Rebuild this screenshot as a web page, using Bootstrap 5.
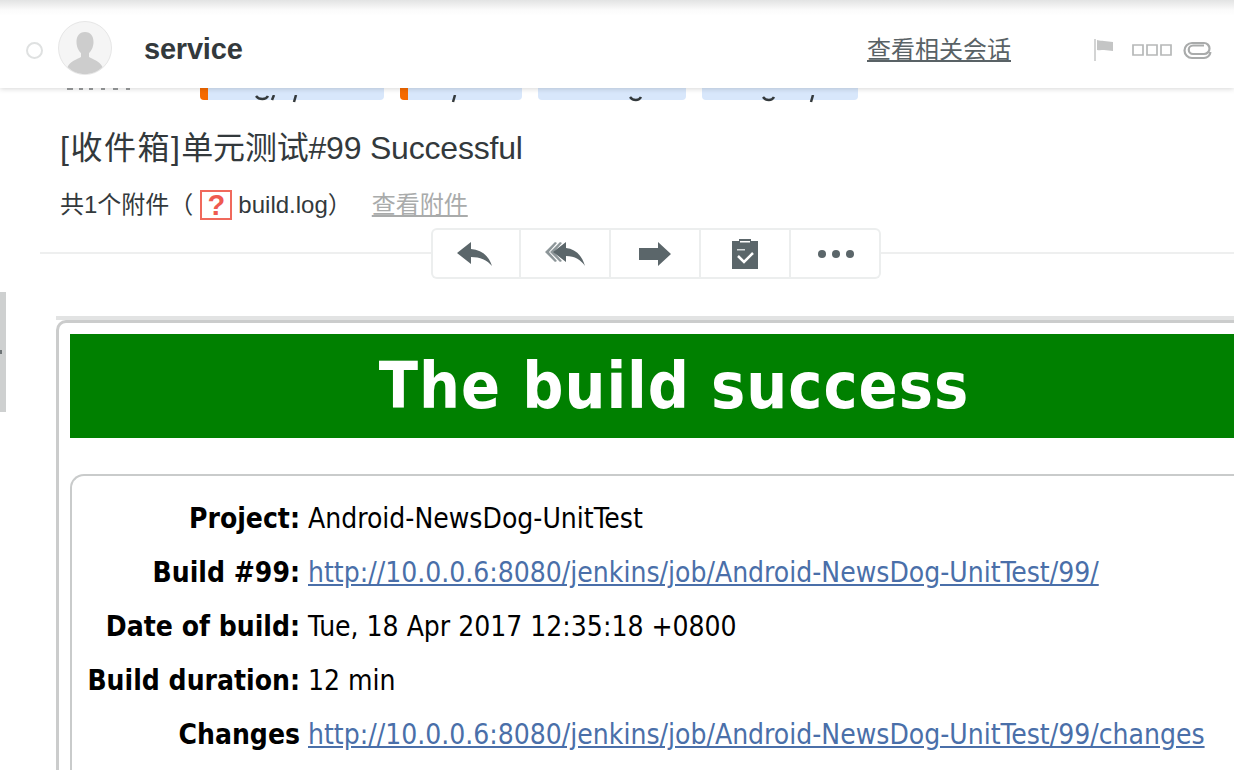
<!DOCTYPE html>
<html lang="zh-CN">
<head>
    <meta charset="UTF-8">
    <title>单元测试#99 Successful</title>
    <link href="https://cdn.jsdelivr.net/npm/bootstrap@5.3.0/dist/css/bootstrap.min.css" rel="stylesheet">
    <style>
        html, body {
            height: 770px;
            overflow: hidden;
        }

        body {
            background-color: #fff;
            color: #33393c;
            font-family: "Liberation Sans", "Noto Sans CJK SC", sans-serif;
        }

        .mail-head {
            height: 88px;
            padding: 12px 22px 0 26px;
            background: linear-gradient(#e2e3e3, #fbfbfb 10px, #fff 16px);
            box-shadow: 0 1px 5px rgba(0, 0, 0, .16);
            position: relative;
            z-index: 2;
        }

        .unread-dot {
            width: 17px;
            height: 17px;
            border: 2px solid #dfe1e1;
            border-radius: 50%;
            margin-right: 15px;
        }

        .avatar-pic {
            width: 54px;
            height: 54px;
            margin-top: -4px;
        }

        .sender-name {
            font-size: 29px;
            font-weight: 700;
            margin-left: 32px;
            margin-top: -1px;
            letter-spacing: -.2px;
        }

        .related-link {
            font-size: 24px;
            color: #596266;
            margin-right: 82px;
            line-height: 30px;
        }

        .flag-pic {
            margin-right: 13px;
        }

        .tofu-pic {
            margin: 0 11px 0 5px;
        }

        .tag-strip {
            height: 12px;
            padding-left: 65px;
            gap: 16px;
        }

        .from-marks {
            margin-right: -1px;
        }

        .tag-pill {
            height: 12px;
            background-color: #d8e7fb;
            border-radius: 0 0 4px 4px;
        }

        .tag-pill.is-marked {
            border-left: 8px solid #f56a00;
        }

        .subject-line {
            font-size: 32px;
            line-height: 40px;
            font-weight: 400;
            letter-spacing: -.2px;
            margin: 28px 0 0 60px;
        }

        .subject-box {
            letter-spacing: 1.500px;
        }

        .attach-line {
            font-size: 24px;
            line-height: 32px;
            margin: 21px 0 0 60px;
        }

        .attach-icon {
            width: 32px;
            height: 30px;
            border: 2px solid #f0695c;
            color: #ef5a50;
            font-size: 29px;
            font-weight: 700;
            line-height: 26px;
            margin: 0 6px 0 7px;
        }

        .attach-link {
            color: #a9abab;
            margin-left: 20px;
        }

        .action-wrap {
            margin: 7px 0 0 40px;
            height: 51px;
        }

        .action-rule {
            position: absolute;
            left: 0;
            right: 0;
            top: 24px;
            border-top: 2px solid #eeefef;
        }

        .action-group {
            position: relative;
            margin-left: 391px;
            width: 450px;
            height: 51px;
            background-color: #fff;
            box-shadow: inset 0 0 0 2px #eceeee;
            border-radius: 6px;
        }

        .action-btn {
            width: 90px;
            height: 100%;
            border-right: 2px solid #eceeee;
        }

        .action-btn:last-child {
            border-right: 0;
        }

        .side-tab {
            position: absolute;
            left: 0;
            top: 292px;
            width: 6px;
            height: 120px;
            background-color: #ced0d0;
        }

        .side-tab::after {
            content: "";
            position: absolute;
            left: 0;
            top: 58px;
            width: 2px;
            height: 4px;
            background-color: #6e7476;
        }

        .mail-frame {
            margin: 37px 0 0 56px;
            width: 1300px;
            height: 470px;
            border-top: 4px solid #e2e3e3;
        }

        .frame-inner {
            height: 100%;
            border: 3px solid #cbcccc;
            border-right: 0;
            border-bottom: 0;
            border-top-left-radius: 10px;
            padding: 11px 0 0 11px;
            font-family: "DejaVu Sans", sans-serif;
            color: #000;
        }

        .build-banner {
            width: 1208px;
            height: 104px;
            background-color: #008000;
            color: #fff;
            font-size: 64px;
            font-stretch: condensed;
            letter-spacing: 1px;
            font-weight: 700;
            line-height: 104px;
        }

        .info-box {
            margin-top: 36px;
            height: 400px;
            border: 2px solid #c9cbcb;
            border-right: 0;
            border-bottom: 0;
            border-top-left-radius: 14px;
            padding-top: 16px;
        }

        .info-row {
            height: 54px;
            line-height: 54px;
            font-size: 28px;
            font-stretch: condensed;
        }

        .info-label {
            width: 228px;
            margin-right: 8px;
            font-weight: 700;
        }

        .info-row a {
            color: #4a6fa9;
        }
    </style>
</head>
<body>
<header class="mail-head d-flex align-items-center">
    <span class="unread-dot flex-shrink-0"></span>
    <svg class="avatar-pic flex-shrink-0" viewBox="0 0 54 54">
        <circle cx="27" cy="27" r="26.500" fill="#f5f5f5" stroke="#e6e6e6"/>
        <path d="M27 11c-6 0-8.500 4.500-8.500 10 0 4.500 2 9 4.500 11v4c-3 2-11 4-13.500 10 4.500 4.500 11 7 17.500 7s13-2.500 17.500-7c-2.500-6-10.500-8-13.500-10v-4c2.500-2 4.500-6.500 4.500-11 0-5.500-2.500-10-8.500-10z" fill="#cdcdcd"/>
    </svg>
    <span class="sender-name">service</span>
    <a href="#" class="related-link ms-auto">查看相关会话</a>
    <svg width="21" height="24" viewBox="0 0 21 24" class="flag-pic">
        <path d="M2 1v22" stroke="#d3d4d4" stroke-width="2"/>
        <path d="M4 2c3 1 5 .5 7 1l9 1v9l-9-1c-2 0-4 .5-7 0z" fill="#c4c5c5"/>
    </svg>
    <svg width="40" height="14" viewBox="0 0 40 14" class="tofu-pic">
        <path d="M1 2h10v10H1zM15 2h10v10H15zM29 2h10v10H29z" fill="none" stroke="#b6b8b8" stroke-width="1.700"/>
    </svg>
    <svg width="29" height="20" viewBox="0 0 29 20">
        <path d="M21 5.500H10a4.200 4.200 0 0 0 0 8.500h11a4.500 4.500 0 0 0 0-11H9A7.500 7.500 0 0 0 9 18h12a7 7 0 0 0 6.500-6" fill="none" stroke="#a9abab" stroke-width="2.200"/>
    </svg>
</header>

<div class="side-tab"></div>

<div class="tag-strip d-flex">
    <svg class="from-marks" width="120" height="4" viewBox="0 0 120 4">
        <path d="M2 1h6M14 1h4M24 1h4M36 1h4M48 1h5M61 1h4" stroke="#9a9d9e" stroke-width="2"/>
    </svg>
    <span class="tag-pill is-marked" style="width: 184px">
        <svg width="176" height="12" viewBox="0 0 176 12">
            <path d="M48 1c3 4 10 4 12 0" fill="none" stroke="#33393c" stroke-width="2.500"/>
            <path d="M66 0l-2 5M88 0l-2 7" stroke="#33393c" stroke-width="2.500"/>
        </svg>
    </span>
    <span class="tag-pill is-marked" style="width: 122px">
        <svg width="114" height="12" viewBox="0 0 114 12">
            <path d="M47 0l-2 7" stroke="#33393c" stroke-width="2.500"/>
        </svg>
    </span>
    <span class="tag-pill" style="width: 148px">
        <svg width="148" height="12" viewBox="0 0 148 12">
            <path d="M92 2c3 4 9 4 11 0" fill="none" stroke="#33393c" stroke-width="2.500"/>
        </svg>
    </span>
    <span class="tag-pill" style="width: 156px">
        <svg width="156" height="12" viewBox="0 0 156 12">
            <path d="M61 2c3 4 9 4 11 0" fill="none" stroke="#33393c" stroke-width="2.500"/>
            <path d="M111 0l-2 7" stroke="#33393c" stroke-width="2.500"/>
        </svg>
    </span>
</div>

<h1 class="subject-line"><span class="subject-box">[收件箱]</span>单元测试#99 Successful</h1>

<div class="attach-line d-flex align-items-center">
    <span>共1个附件（</span>
    <span class="attach-icon d-inline-block text-center">?</span>
    <span>build.log）</span>
    <a href="#" class="attach-link">查看附件</a>
</div>

<div class="action-wrap position-relative">
    <div class="action-rule"></div>
    <div class="action-group d-flex">
        <div class="action-btn d-flex align-items-center justify-content-center">
            <svg width="38" height="26" viewBox="0 0 38 26"><path d="M1 12 15 1v7c11 1 18 7 21 17-5-6-12-9-21-9v7z" fill="#5b666a"/></svg>
        </div>
        <div class="action-btn d-flex align-items-center justify-content-center">
            <svg width="42" height="28" viewBox="0 0 42 28"><path d="M1 12 11 2l2 1-8 9 8 9-2 1zM6 12 16 2l2 1-8 9 8 9-2 1z" fill="#8d9699"/><path d="M9 12 22 2v6c9 1 16 7 19 18-4-6-10-10-19-10v6z" fill="#5b666a"/></svg>
        </div>
        <div class="action-btn d-flex align-items-center justify-content-center">
            <svg width="34" height="26" viewBox="0 0 34 26"><path d="M1 7h19V1l13 12-13 12v-6H1z" fill="#5b666a"/></svg>
        </div>
        <div class="action-btn d-flex align-items-center justify-content-center">
            <svg width="28" height="32" viewBox="0 0 28 32"><path d="M8 1h12v2h7v28H1V3h7z" fill="#5b666a"/><path d="M9 3h10v1.500H9z" fill="#fff"/><path d="M6 11h8v1.500H6z" fill="#d5d9da"/><path d="M7 18l6 6 9-9" fill="none" stroke="#fff" stroke-width="2.500"/></svg>
        </div>
        <div class="action-btn d-flex align-items-center justify-content-center">
            <svg width="38" height="10" viewBox="0 0 38 10"><circle cx="5" cy="5" r="4" fill="#5b666a"/><circle cx="19" cy="5" r="4" fill="#5b666a"/><circle cx="33" cy="5" r="4" fill="#5b666a"/></svg>
        </div>
    </div>
</div>

<div class="mail-frame">
    <div class="frame-inner">
        <div class="build-banner text-center">The build success</div>
        <div class="info-box">
            <div class="info-row d-flex"><div class="info-label text-end">Project:</div><div>Android-NewsDog-UnitTest</div></div>
            <div class="info-row d-flex"><div class="info-label text-end">Build #99:</div><div><a href="#">http://10.0.0.6:8080/jenkins/job/Android-NewsDog-UnitTest/99/</a></div></div>
            <div class="info-row d-flex"><div class="info-label text-end">Date of build:</div><div>Tue, 18 Apr 2017 12:35:18 +0800</div></div>
            <div class="info-row d-flex"><div class="info-label text-end">Build duration:</div><div>12 min</div></div>
            <div class="info-row d-flex"><div class="info-label text-end">Changes</div><div><a href="#">http://10.0.0.6:8080/jenkins/job/Android-NewsDog-UnitTest/99/changes</a></div></div>
        </div>
    </div>
</div>

<script src="https://cdn.jsdelivr.net/npm/bootstrap@5.3.0/dist/js/bootstrap.bundle.min.js"></script>
</body>
</html>
